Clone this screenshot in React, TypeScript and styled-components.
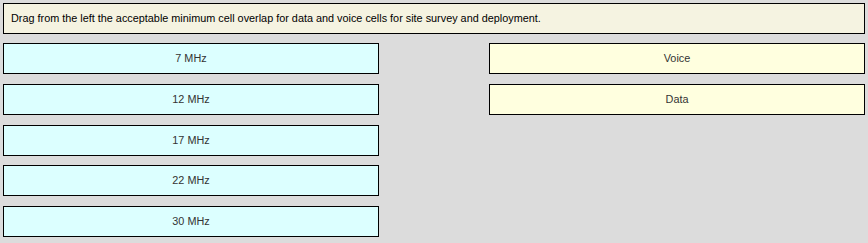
import { createGlobalStyle, styled } from 'styled-components';

const GlobalStyle = createGlobalStyle`
  html, body {
    margin: 0;
    padding: 0;
    background: #dcdcdc;
  }
  body {
    font-family: 'Liberation Sans', Arial, sans-serif;
  }
`;

const Page = styled.div`
  box-sizing: border-box;
  width: 868px;
  height: 243px;
  padding: 3px;
  background: #dcdcdc;
`;

const Prompt = styled.div`
  box-sizing: border-box;
  height: 31px;
  border: 1px solid #000;
  background: #f5f3e1;
  padding: 0 0 2px 7px;
  display: flex;
  align-items: center;
  font-size: 10.85px;
  color: #000;
`;

const Board = styled.div`
  display: grid;
  grid-template-columns: 376px 376px;
  column-gap: 110px;
  margin-top: 9px;
`;

const Column = styled.div`
  display: flex;
  flex-direction: column;
  gap: 9.75px;
`;

const Tile = styled.div<{ $kind: 'option' | 'target' }>`
  box-sizing: border-box;
  height: 31px;
  border: 1px solid #000;
  background: ${(p) => (p.$kind === 'option' ? '#dcffff' : '#ffffdf')};
  display: flex;
  align-items: center;
  justify-content: center;
  padding-bottom: 1px;
  font-size: 10.85px;
  color: #333;
`;

const options = ['7 MHz', '12 MHz', '17 MHz', '22 MHz', '30 MHz'];
const targets = ['Voice', 'Data'];

const App = () => {
  return (
    <>
      <GlobalStyle />
      <Page>
        <Prompt>
          Drag from the left the acceptable minimum cell overlap for data and voice cells for site survey and deployment.
        </Prompt>
        <Board>
          <Column>
            {options.map((o) => (
              <Tile key={o} $kind="option">
                {o}
              </Tile>
            ))}
          </Column>
          <Column>
            {targets.map((t) => (
              <Tile key={t} $kind="target">
                {t}
              </Tile>
            ))}
          </Column>
        </Board>
      </Page>
    </>
  );
};

export default App;
